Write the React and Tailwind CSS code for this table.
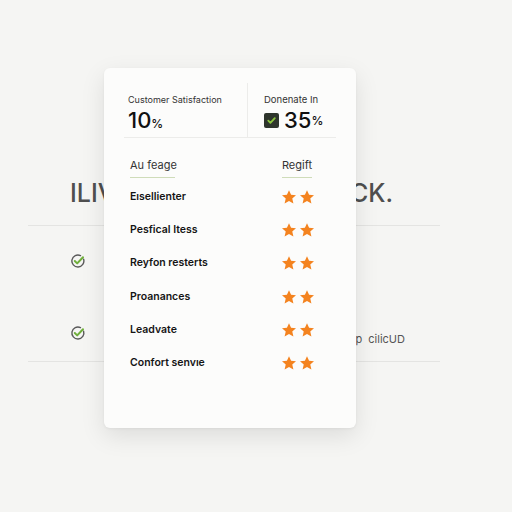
import React from "react";

function Star() {
  return (
    <svg width="16" height="16" viewBox="0 0 24 24">
      <path d="M12 1.8l3.1 6.9 7.4.7-5.6 5 1.7 7.4L12 18l-6.6 3.8 1.7-7.4-5.6-5 7.4-.7z" fill="#f4831f" />
    </svg>
  );
}

function CheckCircle() {
  return (
    <svg width="16" height="16" viewBox="0 0 16 16">
      <path d="M13.6 6.2A6 6 0 1 1 10.5 2.6" fill="none" stroke="#5a5a5a" strokeWidth="1.4" strokeLinecap="round" />
      <path d="M4.8 8l2.4 2.4L13 4.2" fill="none" stroke="#6fae3b" strokeWidth="2" strokeLinecap="round" strokeLinejoin="round" />
    </svg>
  );
}

const rows = [
  "Eısellienter",
  "Pesfical Itess",
  "Reyfon resterts",
  "Proanances",
  "Leadvate",
  "Confort senvıe",
];

export default function App() {
  return (
    <div
      className="relative w-[512px] h-[512px] overflow-hidden bg-[#f5f5f3]"
      style={{ fontFamily: "Inter, 'Noto Sans', sans-serif" }}
    >
      {/* background page */}
      <div className="flex flex-col pt-[176px] pl-[28px] w-[440px]">
        <div className="flex justify-between pl-[42px] pr-[47px] text-[25px] leading-[34px] text-[#4f4f4f] font-medium">
          <span>ILIV</span>
          <span>CK.</span>
        </div>
        <div className="mt-[15px] h-px bg-[#e4e4e2]" />
        <div className="flex flex-col">
          <div className="flex items-center h-[72px] pl-[42px] pb-[2px]">
            <CheckCircle />
          </div>
          <div className="flex items-center h-[63px] pl-[42px] pt-[6px]">
            <CheckCircle />
            <div className="ml-auto mr-[35px] mt-[13px] text-[11px] text-[#555] whitespace-nowrap">p&nbsp; cilicUD</div>
          </div>
        </div>
        <div className="h-px bg-[#e4e4e2]" />
      </div>

      {/* card */}
      <div className="absolute left-[104px] top-[68px] w-[252px] h-[360px] rounded-[6px] bg-[#fcfcfb] shadow-[0_8px_24px_rgba(0,0,0,0.10),0_1px_3px_rgba(0,0,0,0.05)] px-[20px] pt-[15px]">
        <div className="flex h-[55px] border-b border-[#ececea]">
          <div className="w-[124px] border-r border-[#ececea] pl-[4px] pt-[11px]">
            <div className="text-[9px] leading-[12px] text-[#333] whitespace-nowrap">Customer Satisfaction</div>
            <div className="flex items-baseline mt-[1px] text-[#111]">
              <span className="text-[22px] leading-[26px] font-medium">10</span>
              <span className="text-[12px] font-medium">%</span>
            </div>
          </div>
          <div className="flex-1 pl-[16px] pt-[11px]">
            <div className="text-[9.5px] leading-[12px] text-[#333] whitespace-nowrap">Donenate In</div>
            <div className="flex items-center mt-[1px] text-[#111]">
              <div className="w-[15px] h-[15px] rounded-[2px] bg-[#2e352c] flex items-center justify-center mr-[5px]">
                <svg width="11" height="11" viewBox="0 0 12 12">
                  <path d="M2.5 6.2l2.3 2.3L9.6 3.4" fill="none" stroke="#8cc63f" strokeWidth="2" strokeLinecap="round" strokeLinejoin="round" />
                </svg>
              </div>
              <span className="text-[22px] leading-[26px] font-medium">35</span>
              <span className="text-[12px] font-medium self-end mb-[3px]">%</span>
            </div>
          </div>
        </div>

        <div className="flex justify-between pl-[6px] pr-[24px] pt-[20px]">
          <div className="flex flex-col">
            <span className="text-[11px] leading-[14px] text-[#333]">Au feage</span>
            <div className="mt-[5px] h-px w-[45px] bg-[#cfdcb9]" />
          </div>
          <div className="flex flex-col">
            <span className="text-[11px] leading-[14px] text-[#333]">Regift</span>
            <div className="mt-[5px] h-px w-[30px] bg-[#cfdcb9]" />
          </div>
        </div>

        <div className="flex flex-col pl-[6px] pr-[21px] pt-[2px]">
          {rows.map((r) => (
            <div key={r} className="flex items-center justify-between h-[33.3px]">
              <span className="text-[10.5px] font-semibold text-[#151515] whitespace-nowrap">{r}</span>
              <div className="flex gap-[2px]">
                <Star />
                <Star />
              </div>
            </div>
          ))}
        </div>
      </div>
    </div>
  );
}
